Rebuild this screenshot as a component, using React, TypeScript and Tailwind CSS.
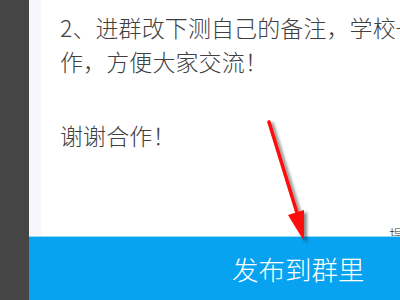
import React from "react";

const font = { fontFamily: '"Noto Sans CJK SC", "Noto Sans", sans-serif' };

export default function App() {
  return (
    <div className="relative flex w-[400px] h-[300px] overflow-hidden bg-white" style={font}>
      {/* left dark rail */}
      <div className="w-[29px] shrink-0 bg-[#454545]" />

      <div className="flex flex-1 flex-col">
        {/* message body */}
        <div className="relative flex flex-1 overflow-hidden">
          <div className="w-[12px] shrink-0 bg-[#f8f6fa]" />
          <div className="pl-[19px] pt-[10px] text-[23px] leading-[34px] tracking-[0.1px] font-light text-[#404040] whitespace-nowrap">
            <p>2、进群改下测自己的备注，学校+</p>
            <p>作，方便大家交流！</p>
            <p>&nbsp;</p>
            <p className="mt-[6px]">谢谢合作！</p>
          </div>
          <span className="absolute right-[5px] bottom-[-9px] text-[14px] font-light text-[#333]">提</span>
        </div>

        {/* publish bar */}
        <div className="h-px bg-[#8fdcf7]" />
        <div className="flex h-[63px] items-center bg-[#07a3f0] pl-[203px] text-[26.5px] font-light text-white">
          发布到群里
        </div>
      </div>

      {/* red annotation arrow */}
      <svg className="absolute left-0 top-0 pointer-events-none" width="400" height="300" viewBox="0 0 400 300">
        <defs>
          <filter id="sh" x="-50%" y="-50%" width="200%" height="200%">
            <feDropShadow dx="3" dy="2" stdDeviation="1.5" floodColor="#000" floodOpacity="0.45" />
          </filter>
        </defs>
        <g filter="url(#sh)">
          <line x1="269" y1="122" x2="298" y2="216" stroke="#ff0a0a" strokeWidth="3.5" strokeLinecap="round" />
          <polygon points="304,241 288,215 304,210" fill="#ff0a0a" />
        </g>
      </svg>
    </div>
  );
}
